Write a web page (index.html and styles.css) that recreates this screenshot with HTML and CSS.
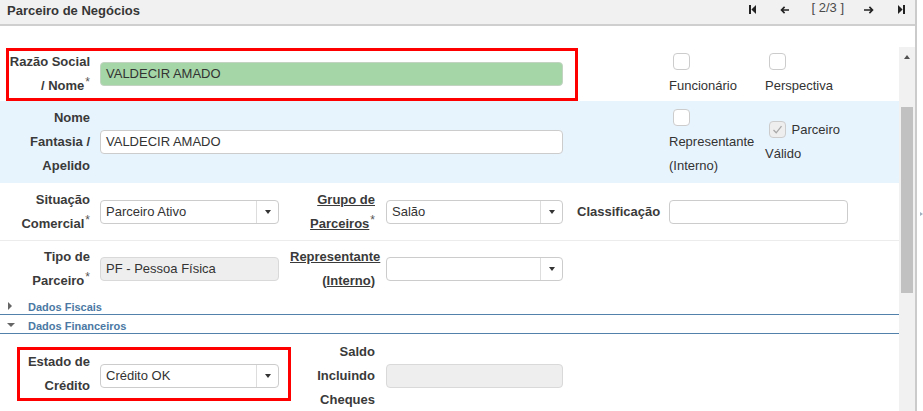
FILE: index.html
```html
<!DOCTYPE html>
<html lang="pt-BR">
<head>
<meta charset="utf-8">
<title>Parceiro de Negócios</title>
<link rel="stylesheet" href="styles.css">
</head>
<body>
<div class="app">
  <div class="panel">
    <header class="hdr">
      <div class="title">Parceiro de Negócios</div>
      <nav class="nav">
        <svg class="ic ic-first" width="7" height="9" viewBox="0 0 7 9"><rect x="0" y="0" width="2" height="9"/><polygon points="7,0 2.4,4.5 7,9"/></svg>
        <svg class="ic ic-prev" width="9" height="8" viewBox="0 0 9 8"><path d="M9 4H1.6M4.6 0.9L1.5 4L4.6 7.1" fill="none" stroke-width="1.6"/></svg>
        <span class="pager">[ 2/3 ]</span>
        <svg class="ic ic-next" width="10" height="8" viewBox="0 0 10 8"><path d="M0 4H8.4M5.4 0.9L8.5 4L5.4 7.1" fill="none" stroke-width="1.6"/></svg>
        <svg class="ic ic-last" width="7" height="9" viewBox="0 0 7 9"><polygon points="0,0 4.6,4.5 0,9"/><rect x="5" y="0" width="2" height="9"/></svg>
      </nav>
    </header>
    <div class="topgap"></div>
    <div class="body">
      <div class="content">
        <div class="row r1">
          <div class="field mark m1">
            <div class="lbl">Razão Social / Nome<sup class="req">*</sup></div>
            <div class="inp green w-lg ctl">VALDECIR AMADO</div>
          </div>
          <div class="checks">
            <label class="chk"><span class="box"></span> Funcionário</label>
            <label class="chk"><span class="box"></span> Perspectiva</label>
          </div>
        </div>
        <div class="row r2">
          <div class="field">
            <div class="lbl">Nome Fantasia / Apelido</div>
            <div class="inp w-lg ctl">VALDECIR AMADO</div>
          </div>
          <div class="checks">
            <label class="chk"><span class="box"></span> Representante (Interno)</label>
            <label class="chk"><span class="box on"><svg width="15" height="15" viewBox="0 0 15 15"><polyline points="3.5,8 6.2,10.8 11.5,4.2" fill="none" stroke="#a9a9a9" stroke-width="1.3"/></svg></span> Parceiro Válido</label>
          </div>
        </div>
        <div class="row r3">
          <div class="field">
            <div class="lbl">Situação Comercial<sup class="req">*</sup></div>
            <div class="sel w-sm ctl"><span class="v">Parceiro Ativo</span><span class="btn"><span class="caret"></span></span></div>
          </div>
          <div class="field f2">
            <div class="lbl lbl2"><span class="lnk">Grupo de Parceiros</span><sup class="req">*</sup></div>
            <div class="sel w-md ctl2"><span class="v">Salão</span><span class="btn"><span class="caret"></span></span></div>
          </div>
          <div class="field f3">
            <div class="lbl lbl3">Classificação</div>
            <div class="inp w-sm ctl"></div>
          </div>
        </div>
        <div class="row r4">
          <div class="field">
            <div class="lbl">Tipo de Parceiro<sup class="req">*</sup></div>
            <div class="inp ro w-sm ctl">PF - Pessoa Física</div>
          </div>
          <div class="field f2">
            <div class="lbl lbl2"><span class="lnk">Representante</span> (<span class="lnk">Interno</span>)</div>
            <div class="sel w-md ctl2"><span class="v"></span><span class="btn"><span class="caret"></span></span></div>
          </div>
        </div>
        <div class="sec"><span class="tri-r"></span><span class="sec-t">Dados Fiscais</span></div>
        <div class="sec"><span class="tri-d"></span><span class="sec-t">Dados Financeiros</span></div>
        <div class="row r5">
          <div class="field mark m2">
            <div class="lbl up">Estado de Crédito</div>
            <div class="sel w-sm ctl"><span class="v">Crédito OK</span><span class="btn"><span class="caret"></span></span></div>
          </div>
          <div class="field f2">
            <div class="lbl lbl2">Saldo Incluindo Cheques</div>
            <div class="inp ro w-md ctl2"></div>
          </div>
        </div>
      </div>
      <div class="sb">
        <div class="sb-up"><span class="sb-tri"></span></div>
        <div class="sb-thumb"></div>
      </div>
    </div>
  </div>
  <div class="edge"><span class="edge-tri"></span></div>
</div>
</body>
</html>
```

FILE: styles.css
```css
* { box-sizing: border-box; }
html, body { margin: 0; padding: 0; }
body {
  width: 923px;
  height: 411px;
  overflow: hidden;
  background: #fff;
  font-family: "Liberation Sans", Arial, sans-serif;
  font-size: 13px;
  color: #333;
}
.app { display: flex; height: 411px; }
.panel {
  width: 917px;
  height: 411px;
  border-right: 2px solid #cbcbcb;
  display: flex;
  flex-direction: column;
}
.hdr {
  height: 26px;
  flex: none;
  background: #f1f1f1;
  border-bottom: 2px solid #cfcfcf;
  display: flex;
  align-items: flex-start;
  justify-content: space-between;
  padding-left: 7px;
}
.title { font-weight: bold; line-height: 22px; color: #363636; }
.nav { display: flex; align-items: flex-start; padding-right: 10px; }
.ic { display: block; margin-top: 5px; fill: #222; stroke: #222; }
.ic-first rect, .ic-first polygon, .ic-last rect, .ic-last polygon { stroke: none; }
.ic-first { margin-left: 0; }
.ic-prev { margin-left: 24px; margin-top: 6px; }
.pager { margin-left: 22px; line-height: 16px; color: #4a4a4a; white-space: pre; }
.ic-next { margin-left: 20px; margin-top: 6px; }
.ic-last { margin-left: 24px; }

.topgap { height: 21px; flex: none; }
.body { flex: 1; min-height: 0; display: flex; overflow: hidden; }
.content { width: 899px; overflow: hidden; }

.row { display: flex; align-items: center; padding-left: 8px; }
.r1 { height: 54px; }
.r2 { height: 82px; background: #e8f4fd; }
.r3 { height: 58px; border-bottom: 1px solid #ececec; }
.r4 { height: 55px; }
.r5 { padding-top: 6px; }

.field { display: flex; align-items: center; position: relative; }
.lbl { width: 82px; text-align: right; font-weight: bold; line-height: 24px; color: #3a3a3a; }
.lbl2 { width: 85px; }
.lbl3 { width: 82px; text-align: left; }
.lbl.up { margin-top: -4px; }
.f2 { margin-left: 11px; }
.f3 { margin-left: 14px; }
.ctl { margin-left: 10px; }
.ctl2 { margin-left: 11px; }
.lnk { text-decoration: underline; }
.req {
  font-size: 12px;
  line-height: 16px;
  vertical-align: top;
  font-weight: normal;
  margin-left: 1px;
  color: #555;
}

.w-lg { width: 463px; }
.w-sm { width: 179px; }
.w-md { width: 177px; }

.inp {
  height: 24px;
  border: 1px solid #cccccc;
  border-radius: 4px;
  background: #fff;
  padding: 0 5px;
  line-height: 22px;
  white-space: nowrap;
}
.inp.green { background: #a5d6a7; border-color: #c2d3c2; }
.inp.ro { background: #eeeeee; border-color: #d9d9d9; }

.sel {
  display: flex;
  height: 24px;
  border: 1px solid #cccccc;
  border-radius: 4px;
  background: #fff;
}
.sel .v { flex: 1; padding-left: 5px; line-height: 22px; white-space: nowrap; }
.sel .btn {
  width: 22px;
  border-left: 1px solid #dddddd;
  display: flex;
  align-items: center;
  justify-content: center;
}
.caret {
  width: 0;
  height: 0;
  border-left: 3.5px solid transparent;
  border-right: 3.5px solid transparent;
  border-top: 4px solid #333;
}

.checks { display: flex; align-items: center; gap: 6px; margin-left: 106px; }
.chk { width: 90px; line-height: 24px; }
.box {
  display: inline-block;
  width: 17px;
  height: 17px;
  border: 1px solid #cccccc;
  border-radius: 4px;
  background: #fff;
  vertical-align: middle;
  margin: -2px 2px 0 4px;
}
.box.on { background: #eeeeee; }
.box svg { display: block; }

.mark::after {
  content: "";
  position: absolute;
  border: 3px solid #ff0000;
  pointer-events: none;
}
.m1::after { left: -2px; right: -15px; top: -2px; bottom: -3px; }
.m2::after { left: 9px; right: -12px; top: -7px; bottom: -3px; }

.sec {
  height: 19px;
  border-bottom: 1px solid #5282ac;
  padding: 4px 0 0 7px;
  display: flex;
  align-items: center;
}
.sec-t { font-size: 11px; font-weight: bold; color: #4b79a4; line-height: 14px; }
.tri-r {
  width: 0; height: 0;
  border-top: 4px solid transparent;
  border-bottom: 4px solid transparent;
  border-left: 4px solid #666;
  margin: -3px 16px 0 1px;
}
.tri-d {
  width: 0; height: 0;
  border-left: 4px solid transparent;
  border-right: 4px solid transparent;
  border-top: 4px solid #666;
  margin: -3px 13px 0 0;
}

.sb {
  width: 16px;
  background: #f1f1f1;
  display: flex;
  flex-direction: column;
  align-items: center;
}
.sb-up { height: 20px; width: 100%; display: flex; align-items: center; justify-content: center; }
.sb-tri {
  width: 0; height: 0;
  border-left: 3.5px solid transparent;
  border-right: 3.5px solid transparent;
  border-bottom: 4px solid #505050;
}
.sb-thumb { width: 12px; height: 186px; margin-top: 40px; background: #c1c1c1; }

.edge { width: 6px; padding-top: 212px; }
.edge-tri {
  display: block;
  width: 0; height: 0;
  margin-left: 3px;
  border-top: 2.5px solid transparent;
  border-bottom: 2.5px solid transparent;
  border-left: 3px solid #9fb0c0;
}
```
